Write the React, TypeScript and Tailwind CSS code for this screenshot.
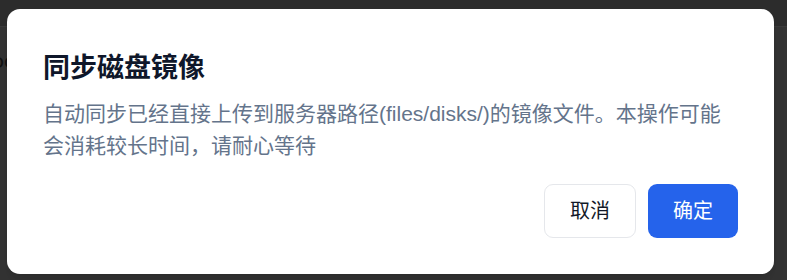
export default function App() {
  return (
    <div
      className="relative h-[280px] w-[787px] overflow-hidden bg-[#333333]"
      style={{ fontFamily: 'Inter, "Noto Sans CJK SC", sans-serif' }}
    >
      {/* page behind the overlay */}
      <div className="h-[27px] border-b border-[#3a3a3a] bg-[#2c2c2c]" />
      <div className="pt-[22px] text-[20px] leading-[24px] text-[#111] -ml-[8px]">oc</div>

      {/* dialog */}
      <div className="absolute left-[7px] top-[9px] flex w-[767px] flex-col rounded-[13px] bg-white px-[36px] pb-[36px] pt-[36px] shadow-lg">
        <h2 className="text-[27px] font-bold leading-[46px] text-[#0f172a]">同步磁盘镜像</h2>
        <p
          className="mt-[7px] text-[21px] leading-[32px] text-[#64748b]"
          style={{ fontFamily: '"Liberation Sans", "Noto Sans CJK SC", sans-serif' }}
        >
          自动同步已经直接上传到服务器路径(files/disks/)的镜像文件。本操作可能会消耗较长时间，请耐心等待
        </p>
        <div className="mt-[22px] flex justify-end gap-[12px]">
          <button className="h-[54px] w-[92px] rounded-[9px] border border-[#e5e7eb] bg-white text-[20px] text-[#111827]">
            取消
          </button>
          <button className="h-[54px] w-[90px] rounded-[9px] bg-[#2563eb] text-[20px] text-white">
            确定
          </button>
        </div>
      </div>
    </div>
  );
}
